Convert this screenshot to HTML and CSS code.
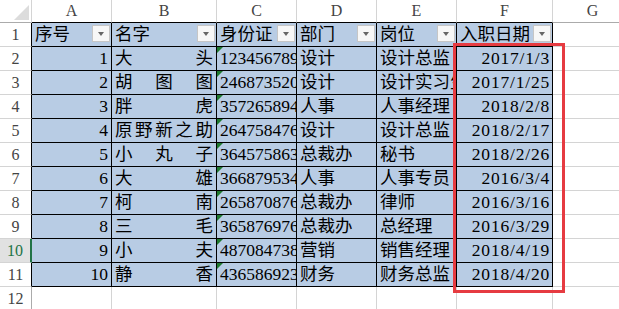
FILE: index.html
```html
<!DOCTYPE html>
<html lang="zh-CN">
  <head>
    <meta charset="UTF-8" />
    <title>员工表</title>
    <link rel="stylesheet" href="styles.css">
  </head>
  <body>
    <div class="sheet">
      <!-- column headers -->
      <div class="corner">
        <svg width="15" height="15" viewBox="0 0 15 15"><polygon points="15,0 15,15 0,15" fill="#dcdcdc"/></svg>
      </div>
      <div class="colh in">A</div>
      <div class="colh in">B</div>
      <div class="colh in">C</div>
      <div class="colh in">D</div>
      <div class="colh in">E</div>
      <div class="colh in">F</div>
      <div class="colh">G</div>

      <!-- row 1 -->
      <div class="rowh in">1</div>
      <div class="c t th">序号<span class="drop"></span></div>
      <div class="c t th">名字<span class="drop"></span></div>
      <div class="c t th">身份证<span class="drop"></span></div>
      <div class="c t th">部门<span class="drop"></span></div>
      <div class="c t th">岗位<span class="drop"></span></div>
      <div class="c t th">入职日期<span class="drop"></span></div>
      <div class="c"></div>

      <!-- row 2 -->
      <div class="rowh in">2</div>
      <div class="c t num">1</div>
      <div class="c t dist">大头</div>
      <div class="c t id">123456789012345678</div>
      <div class="c t">设计</div>
      <div class="c t">设计总监</div>
      <div class="c t num date">2017/1/3</div>
      <div class="c"></div>

      <!-- row 3 -->
      <div class="rowh in">3</div>
      <div class="c t num">2</div>
      <div class="c t dist">胡图图</div>
      <div class="c t id">246873520123456789</div>
      <div class="c t">设计</div>
      <div class="c t">设计实习生</div>
      <div class="c t num date">2017/1/25</div>
      <div class="c"></div>

      <!-- row 4 -->
      <div class="rowh in">4</div>
      <div class="c t num">3</div>
      <div class="c t dist">胖虎</div>
      <div class="c t id">357265894012345678</div>
      <div class="c t">人事</div>
      <div class="c t">人事经理</div>
      <div class="c t num date">2018/2/8</div>
      <div class="c"></div>

      <!-- row 5 -->
      <div class="rowh in">5</div>
      <div class="c t num">4</div>
      <div class="c t dist">原野新之助</div>
      <div class="c t id">264758476012345678</div>
      <div class="c t">设计</div>
      <div class="c t">设计总监</div>
      <div class="c t num date">2018/2/17</div>
      <div class="c"></div>

      <!-- row 6 -->
      <div class="rowh in">6</div>
      <div class="c t num">5</div>
      <div class="c t dist">小丸子</div>
      <div class="c t id">364575863012345678</div>
      <div class="c t">总裁办</div>
      <div class="c t">秘书</div>
      <div class="c t num date">2018/2/26</div>
      <div class="c"></div>

      <!-- row 7 -->
      <div class="rowh in">7</div>
      <div class="c t num">6</div>
      <div class="c t dist">大雄</div>
      <div class="c t id">366879534012345678</div>
      <div class="c t">人事</div>
      <div class="c t">人事专员</div>
      <div class="c t num date">2016/3/4</div>
      <div class="c"></div>

      <!-- row 8 -->
      <div class="rowh in">8</div>
      <div class="c t num">7</div>
      <div class="c t dist">柯南</div>
      <div class="c t id">265870876012345678</div>
      <div class="c t">总裁办</div>
      <div class="c t">律师</div>
      <div class="c t num date">2016/3/16</div>
      <div class="c"></div>

      <!-- row 9 -->
      <div class="rowh in">9</div>
      <div class="c t num">8</div>
      <div class="c t dist">三毛</div>
      <div class="c t id">365876976012345678</div>
      <div class="c t">总裁办</div>
      <div class="c t">总经理</div>
      <div class="c t num date">2016/3/29</div>
      <div class="c"></div>

      <!-- row 10 -->
      <div class="rowh in sel">10</div>
      <div class="c t num">9</div>
      <div class="c t dist">小夫</div>
      <div class="c t id">487084738012345678</div>
      <div class="c t">营销</div>
      <div class="c t">销售经理</div>
      <div class="c t num date">2018/4/19</div>
      <div class="c"></div>

      <!-- row 11 -->
      <div class="rowh in">11</div>
      <div class="c t num">10</div>
      <div class="c t dist">静香</div>
      <div class="c t id">436586923012345678</div>
      <div class="c t">财务</div>
      <div class="c t">财务总监</div>
      <div class="c t num date">2018/4/20</div>
      <div class="c"></div>

      <!-- row 12 -->
      <div class="rowh">12</div>
      <div class="c"></div>
      <div class="c"></div>
      <div class="c"></div>
      <div class="c"></div>
      <div class="c"></div>
      <div class="c"></div>
      <div class="c"></div>

      <!-- highlight around the date column -->
      <div class="mark"></div>
    </div>
  </body>
</html>
```

FILE: styles.css
```css
* {
  box-sizing: border-box;
}
body {
  margin: 0;
  background: #fff;
  overflow: hidden;
  font-family: "Liberation Serif", "Noto Sans CJK SC", serif;
}
.sheet {
  position: relative;
  display: grid;
  grid-template-columns: 32px 80px 105px 80px 80px 80px 96px 80px;
  grid-template-rows: 23px;
  grid-auto-rows: 24px;
  width: 633px;
}
.corner {
  display: flex;
  align-items: flex-end;
  justify-content: flex-end;
  padding: 0 2px 2px 0;
  border-right: 1px solid #d4d4d4;
  border-bottom: 1px solid #ababab;
}
.colh {
  text-align: center;
  font-size: 16px;
  line-height: 22px;
  color: #444;
  border-right: 1px solid #d4d4d4;
  border-bottom: 1px solid #ababab;
}
.colh.in {
  border-bottom-color: #000;
}
.rowh {
  text-align: center;
  font-size: 16px;
  line-height: 23px;
  color: #444;
  border-right: 1px solid #ababab;
  border-bottom: 1px solid #d4d4d4;
}
.rowh.in {
  border-right-color: #000;
}
.rowh.sel {
  background: #e1e1e1;
  color: #217346;
  border-right: 2px solid #217346;
}
.c {
  position: relative;
  overflow: hidden;
  white-space: nowrap;
  padding: 0 3px;
  font-size: 17.5px;
  line-height: 23px;
  color: #000;
  border-right: 1px solid #d4d4d4;
  border-bottom: 1px solid #d4d4d4;
}
.t {
  background: #b8cce4;
  border-right-color: #000;
  border-bottom-color: #000;
}
.num {
  text-align: right;
}
.date {
  letter-spacing: 0.8px;
  padding-right: 2px;
}
.dist {
  text-align: justify;
  text-align-last: justify;
}
.id::before {
  content: "";
  position: absolute;
  top: 0;
  left: 0;
  border-top: 6px solid #1f7a30;
  border-right: 6px solid transparent;
}
.th {
  overflow: visible;
}
.drop {
  position: absolute;
  top: 2px;
  right: 1px;
  width: 18px;
  height: 17px;
  background: #f7f7f7;
  border: 1px solid #c6c6c6;
}
.drop::after {
  content: "";
  position: absolute;
  left: 5px;
  top: 6px;
  border-top: 4px solid #666;
  border-left: 3.5px solid transparent;
  border-right: 3.5px solid transparent;
}
.mark {
  position: absolute;
  left: 453px;
  top: 43px;
  width: 112px;
  height: 250px;
  border: 3px solid #e63b41;
}
```
